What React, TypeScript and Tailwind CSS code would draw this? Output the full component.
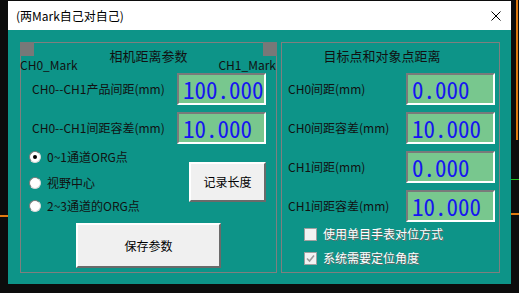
import { ReactNode } from 'react'

const cjk = 'font-["Noto_Sans_CJK_SC","Liberation_Sans",sans-serif]'

function NumBox({ value }: { value: string }) {
  return (
    <div className="flex h-[32px] w-[89px] shrink-0 items-center border-2 border-t-[#7a7a7a] border-l-[#7a7a7a] border-r-white border-b-white bg-[#78c78e] pl-[4px]">
      <span className='font-["Noto_Sans_Mono_CJK_SC","Liberation_Mono",monospace] text-[23px] font-light leading-none text-[#1616f0]'>
        {value}
      </span>
    </div>
  )
}

function Row({ label, value, className }: { label: string; value: string; className: string }) {
  return (
    <div className={className}>
      <span className="text-[12px] leading-[14px] text-[#111]">{label}</span>
      <NumBox value={value} />
    </div>
  )
}

function Radio({ checked, children, className }: { checked?: boolean; children: ReactNode; className: string }) {
  return (
    <div className={className}>
      <span className="flex size-[12px] items-center justify-center rounded-full border border-t-[#7a7a7a] border-l-[#7a7a7a] border-r-[#d8d8d8] border-b-[#d8d8d8] bg-white">
        {checked && <span className="size-[4px] rounded-full bg-black" />}
      </span>
      <span className="text-[12px] leading-[14px] text-[#111]">{children}</span>
    </div>
  )
}

function Check({ checked, children }: { checked?: boolean; children: ReactNode }) {
  return (
    <div className="flex h-[24px] items-center gap-[6px] pl-[22px]">
      <span className="flex size-[13px] items-center justify-center border border-[#a0a0a0] bg-[#f2f2f2]">
        {checked && (
          <svg width="9" height="9" viewBox="0 0 9 9">
            <polyline points="1,4.5 3.5,7 8,1.5" fill="none" stroke="#9a9a9a" strokeWidth="1.6" />
          </svg>
        )}
      </span>
      <span className="text-[12px] leading-[14px] text-white [text-shadow:1px_1px_0_#6b6b6b]">{children}</span>
    </div>
  )
}

export default function App() {
  return (
    <div className={`relative h-[293px] w-[519px] overflow-hidden bg-[#0c0c0c] ${cjk}`}>
      <span className="absolute right-[1px] top-0 h-[140px] w-[2px] bg-[#e07a10]" />
      <span className="absolute right-0 top-[213px] h-[2px] w-[8px] bg-[#e07a10]" />
      <span className="absolute left-0 top-[215px] h-[2px] w-[8px] bg-[#e07a10]" />
      <span className="absolute right-0 top-[179px] h-px w-[8px] bg-[#22c022]" />

      <div className="ml-2 w-[503px] pt-px">
        <div className="flex h-[29px] items-center justify-between bg-white pl-2 pr-[10px]">
          <span className="text-[12px] leading-[14px] text-black">(两Mark自己对自己)</span>
          <svg width="10" height="10" viewBox="0 0 10 10">
            <path d="M0.5 0.5 L9.5 9.5 M9.5 0.5 L0.5 9.5" stroke="#000" strokeWidth="1" />
          </svg>
        </div>

        <div className="flex h-[254px] gap-1 bg-[#0d9488] pl-3 pt-3">
          <div className="relative h-[231px] w-[257px] border border-[#7f7f7f]">
            <span className="absolute -left-px -top-px size-[14px] bg-[#787878]" />
            <span className="absolute -right-px -top-px size-[14px] bg-[#787878]" />
            <div className="grid h-[30px] grid-cols-[1fr_auto_1fr]">
              <span className="-ml-px self-end text-[12px] leading-[16px] text-[#111]">CH0_Mark</span>
              <span className="pt-[6px] text-[13px] leading-[14px] text-[#111]">相机距离参数</span>
              <span className="self-end text-right text-[12px] leading-[16px] text-[#111]">CH1_Mark</span>
            </div>
            <Row className="flex h-[32px] items-center justify-between pl-[11px] pr-[10px]" label="CH0--CH1产品间距(mm)" value="100.000" />
            <Row className="mt-[7px] flex h-[32px] items-center justify-between pl-[11px] pr-[10px]" label="CH0--CH1间距容差(mm)" value="10.000" />
            <div className="flex">
              <div className="flex flex-col pl-2">
                <Radio checked className="flex h-[26px] items-center gap-[6px]">0~1通道ORG点</Radio>
                <Radio className="flex h-[26px] items-center gap-[6px]">视野中心</Radio>
                <Radio className="flex h-[20px] items-center gap-[6px]">2~3通道的ORG点</Radio>
              </div>
              <button className="mr-[10px] ml-auto mt-[18px] h-[40px] w-[77px] border-2 border-t-white border-l-white border-r-[#6a6a6a] border-b-[#6a6a6a] bg-[#f0f0f0] text-[12px] leading-[14px] text-black">
                记录长度
              </button>
            </div>
            <button className="ml-[55px] mt-[7px] h-[45px] w-[145px] border-2 border-t-white border-l-white border-r-[#6a6a6a] border-b-[#6a6a6a] bg-[#f0f0f0] text-[12px] leading-[14px] text-black">
              保存参数
            </button>
          </div>

          <div className="h-[231px] w-[219px] border border-[#7f7f7f]">
            <div className="h-[30px] pr-[17px] pt-[6px] text-center text-[13px] leading-[14px] text-[#111]">
              目标点和对象点距离
            </div>
            <Row className="flex h-[32px] items-center justify-between pl-[6px] pr-[4px]" label="CH0间距(mm)" value="0.000" />
            <Row className="mt-[7px] flex h-[32px] items-center justify-between pl-[6px] pr-[4px]" label="CH0间距容差(mm)" value="10.000" />
            <Row className="mt-[7px] flex h-[32px] items-center justify-between pl-[6px] pr-[4px]" label="CH1间距(mm)" value="0.000" />
            <Row className="mt-[7px] flex h-[32px] items-center justify-between pl-[6px] pr-[4px]" label="CH1间距容差(mm)" value="10.000" />
            <Check>使用单目手表对位方式</Check>
            <Check checked>系统需要定位角度</Check>
          </div>
        </div>
      </div>
    </div>
  )
}
